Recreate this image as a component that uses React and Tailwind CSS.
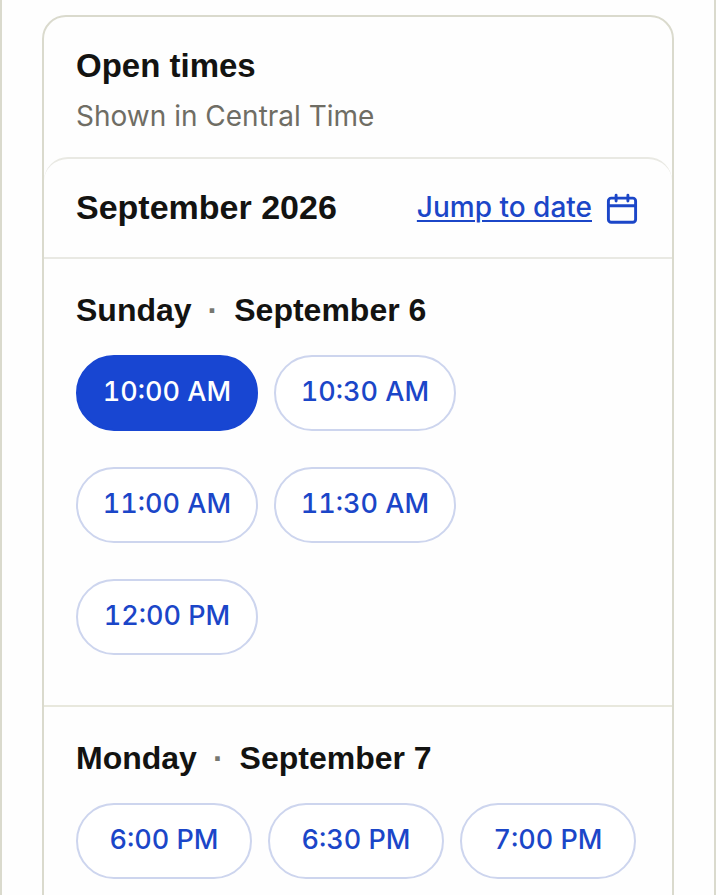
const days = [
  {
    weekday: "Sunday",
    date: "September 6",
    times: ["10:00 AM", "10:30 AM", "11:00 AM", "11:30 AM", "12:00 PM"],
  },
  {
    weekday: "Monday",
    date: "September 7",
    times: ["6:00 PM", "6:30 PM", "7:00 PM"],
  },
];

const selected = { weekday: "Sunday", time: "10:00 AM" };

function CalendarIcon() {
  return (
    <svg
      className="size-9 shrink-0"
      viewBox="0 0 36 36"
      fill="none"
      stroke="currentColor"
      strokeWidth="2.9"
      strokeLinecap="round"
      aria-hidden="true"
    >
      <rect x="4.4" y="9.1" width="27.2" height="24.2" rx="2.8" />
      <path d="M4.4 16.7h27.2M12.1 6.2v5.8M23.9 6.2v5.8" />
    </svg>
  );
}

function TimeButton({ time, active }) {
  const width = time.length > 7 ? "w-[182px]" : "w-44";
  const tone = active
    ? "border-[#1846d2] bg-[#1846d2] text-white"
    : "border-[#cdd5ee] bg-white text-[#1b46c8]";
  return (
    <button
      type="button"
      aria-pressed={active}
      className={`h-[76px] rounded-full border-2 pb-0.5 text-[27px] leading-9 font-medium whitespace-nowrap tabular-nums ${width} ${tone}`}
    >
      {time}
    </button>
  );
}

function Day({ weekday, date, times }) {
  return (
    <section className="border-b-2 border-[#e8e8dd] px-8 pt-[31px] pb-[50px]">
      <h3 className="mb-[25px] flex gap-4 font-['Liberation_Sans',sans-serif] text-[32px] leading-10 font-bold">
        <span>{weekday}</span>
        <span className="text-[#777770]">·</span>
        <span>{date}</span>
      </h3>
      <div className="flex flex-wrap gap-x-4 gap-y-9">
        {times.map((time) => (
          <TimeButton
            key={time}
            time={time}
            active={selected.weekday === weekday && selected.time === time}
          />
        ))}
      </div>
    </section>
  );
}

export default function App() {
  return (
    <main className="min-h-screen border-x-2 border-[#dadacd] bg-[#fefefe] px-10 pt-[15px] font-['Inter',sans-serif] text-[#131311]">
      <div className="rounded-3xl border-2 border-[#dadacd] bg-[#fefefe]">
        <header className="px-8 pt-[29px] pb-[23px]">
          <h1 className="font-['Liberation_Sans',sans-serif] text-[33px] leading-10 font-bold">
            Open times
          </h1>
          <p className="mt-3 text-[28px] leading-9 text-[#6f6d64]">
            Shown in Central Time
          </p>
        </header>
        <div className="rounded-t-3xl border-t-2 border-[#e9e9e3]">
          <div className="flex h-[100px] items-center justify-between border-b-2 border-[#e9e9e3] px-8 pb-0.5">
            <h2 className="font-['Liberation_Sans',sans-serif] text-[34px] leading-10 font-bold">
              September 2026
            </h2>
            <a
              href="#date"
              className="flex items-center gap-3 text-[28px] leading-9 font-medium text-[#1b46c8]"
            >
              <span className="underline decoration-2 underline-offset-3">
                Jump to date
              </span>
              <CalendarIcon />
            </a>
          </div>
        </div>
        {days.map((day) => (
          <Day key={day.weekday} {...day} />
        ))}
      </div>
    </main>
  );
}
